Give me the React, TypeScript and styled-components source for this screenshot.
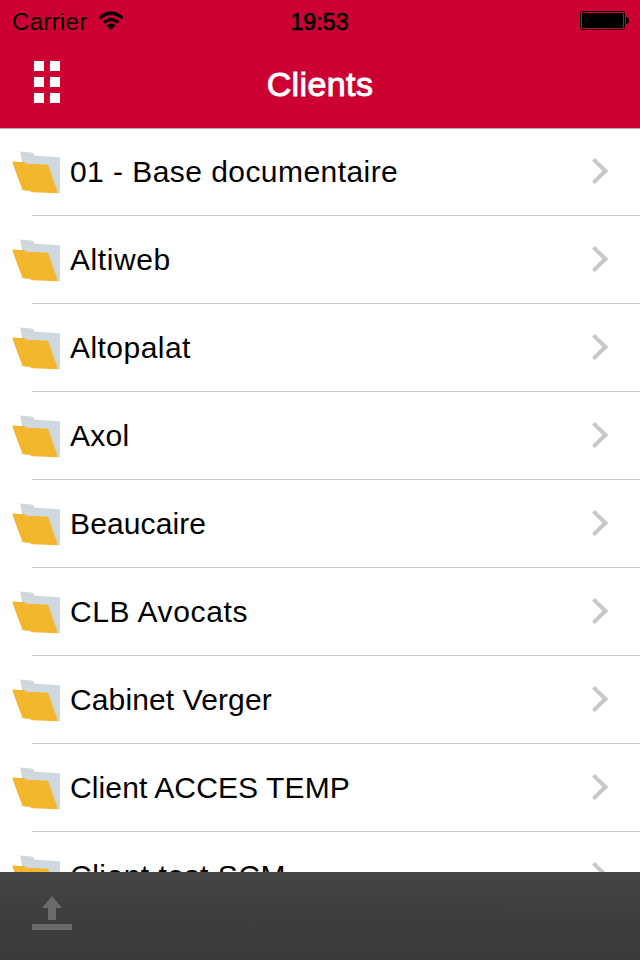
import React from "react";
import styled, { createGlobalStyle } from "styled-components";

const GlobalStyle = createGlobalStyle`
  * { box-sizing: border-box; }
  html, body { margin: 0; padding: 0; overflow: hidden; }
  body { font-family: "Liberation Sans", Arial, sans-serif; background: #fff; }
`;

const Screen = styled.div`
  width: 640px;
  height: 960px;
  display: flex;
  flex-direction: column;
  overflow: hidden;
  background: #fff;
`;

const Header = styled.header`
  flex: none;
  height: 129px;
  background: #cc0033;
  border-bottom: 1px solid #b5adab;
`;

const StatusBar = styled.div`
  height: 40px;
  display: grid;
  grid-template-columns: 1fr auto 1fr;
  align-items: center;
  padding: 0 10px 0 12px;
  color: #000;
  font-size: 24px;
  line-height: 40px;
`;

const Carrier = styled.div`
  display: flex;
  align-items: center;
  gap: 10.5px;
  padding-top: 2px;
  letter-spacing: 0.3px;
`;

const Clock = styled.div`
  margin-left: -3px;
  padding-top: 2px;
  font-size: 23px;
  letter-spacing: 0.1px;
  -webkit-text-stroke: 0.7px #000;
`;

const WifiSvg = styled.svg`
  display: block;
  margin-top: -2px;
`;

const Battery = styled.svg`
  justify-self: end;
  display: block;
  margin-top: -2px;
`;

const NavBar = styled.div`
  height: 88px;
  display: grid;
  grid-template-columns: 1fr auto 1fr;
  align-items: center;
  padding: 0 34px;
`;

const MenuButton = styled.button`
  width: 26px;
  height: 42px;
  margin: -4px 0 0;
  padding: 0;
  border: 0;
  background: none;
  display: grid;
  grid-template-columns: 10px 10px;
  grid-template-rows: repeat(3, 10px);
  gap: 6px;
`;

const MenuDot = styled.span`
  background: #fff;
`;

const Title = styled.h1`
  margin: 0;
  color: #fff;
  font-size: 34px;
  line-height: 40px;
  font-weight: 400;
  letter-spacing: 0.4px;
  -webkit-text-stroke: 1px #fff;
`;

const List = styled.ul`
  flex: 1;
  min-height: 0;
  margin: 0;
  padding: 0;
  list-style: none;
  overflow: hidden;
`;

const Row = styled.li`
  height: 88px;
  display: flex;
  align-items: center;
  padding: 0 32px 2px 12px;
  background: linear-gradient(#c8c7cc, #c8c7cc) 32px 86px / 608px 1px no-repeat;
`;

const FolderSvg = styled.svg`
  flex: none;
  display: block;
  margin-top: 2px;
  filter: blur(0.7px);
`;

const Name = styled.span<{ $tracking: number }>`
  flex: 1;
  margin-left: 10px;
  font-size: 30px;
  line-height: 34px;
  color: #000;
  white-space: nowrap;
  letter-spacing: ${(p) => p.$tracking}px;
`;

const ChevronSvg = styled.svg`
  flex: none;
  display: block;
  margin-top: -2px;
`;

const Toolbar = styled.footer`
  flex: none;
  height: 88px;
  padding: 24px 32px;
  background: linear-gradient(#454545, #3e3e3e 50%, #3a3a3a);
`;

const ToolButton = styled.button`
  display: block;
  padding: 0;
  border: 0;
  background: none;
`;

const clients: { name: string; tracking: number }[] = [
  { name: "01 - Base documentaire", tracking: 0.44 },
  { name: "Altiweb", tracking: 0.6 },
  { name: "Altopalat", tracking: 0.45 },
  { name: "Axol", tracking: 0.3 },
  { name: "Beaucaire", tracking: 0.12 },
  { name: "CLB Avocats", tracking: 0.62 },
  { name: "Cabinet Verger", tracking: 0.12 },
  { name: "Client ACCES TEMP", tracking: 0.12 },
  { name: "Client test SCM", tracking: 0.5 },
];

const Wifi = () => (
  <WifiSvg width="26" height="20" viewBox="0 0 26 20">
    <g fill="none" stroke="#000" strokeWidth="3.3">
      <path d="M1.6 7.2Q13 -2.6 24.4 7.2" />
      <path d="M5.7 11.6Q13 5.2 20.3 11.6" />
    </g>
    <path d="M8.4 14.6Q13 10.6 17.6 14.6L13 19Z" />
  </WifiSvg>
);

const Folder = () => (
  <FolderSvg width="48" height="44" viewBox="0 0 48 44">
    <path d="M8 0.5L20 1.5L23 4.5L48 6.5V43L40 39L12 20Z" fill="#cfd8df" />
    <path d="M0 10.5L13 11.3L15 12.8L36 13.8L46 42.3L20 41.2L18 40L10.5 39.3Z" fill="#f3b72e" />
  </FolderSvg>
);

const Chevron = () => (
  <ChevronSvg width="17" height="28" viewBox="0 0 17 28">
    <path d="M2.5 2.3L14.3 14L2.5 25.7" fill="none" stroke="#c7c7cc" strokeWidth="4" />
  </ChevronSvg>
);

export default function App() {
  return (
    <Screen>
      <GlobalStyle />
      <Header>
        <StatusBar>
          <Carrier>
            Carrier
            <Wifi />
          </Carrier>
          <Clock>19:53</Clock>
          <Battery width="50" height="20" viewBox="0 0 50 20">
            <rect x="0.5" y="1.5" width="44" height="18" rx="2" fill="none" stroke="#000" />
            <rect x="2" y="3" width="41" height="15" rx="1" />
            <path d="M46 7H47Q49 8 49 10.5T47 14H46Z" />
          </Battery>
        </StatusBar>
        <NavBar>
          <MenuButton aria-label="Menu">
            {[0, 1, 2, 3, 4, 5].map((i) => (
              <MenuDot key={i} />
            ))}
          </MenuButton>
          <Title>Clients</Title>
        </NavBar>
      </Header>
      <List>
        {clients.map((c) => (
          <Row key={c.name}>
            <Folder />
            <Name $tracking={c.tracking}>{c.name}</Name>
            <Chevron />
          </Row>
        ))}
      </List>
      <Toolbar>
        <ToolButton aria-label="Upload">
          <svg width="40" height="34" viewBox="0 0 40 34" display="block">
            <path d="M20 0L30 12H24V24H16V12H10Z" fill="#6a6a6a" />
            <path d="M0 28H40V34H0Z" fill="#6a6a6a" />
          </svg>
        </ToolButton>
      </Toolbar>
    </Screen>
  );
}
